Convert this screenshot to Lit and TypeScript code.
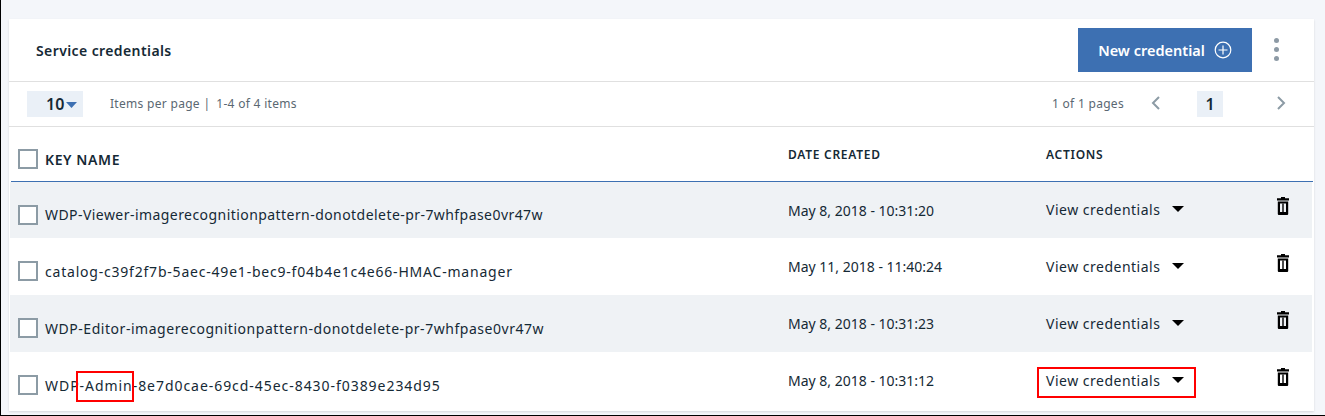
import { LitElement, html, css, svg } from "lit";
import { customElement } from "lit/decorators.js";

const rows = [
  { name: "WDP-Viewer-imagerecognitionpattern-donotdelete-pr-7whfpase0vr47w", date: "May 8, 2018 - 10:31:20", track: 0.44 },
  { name: "catalog-c39f2f7b-5aec-49e1-bec9-f04b4e1c4e66-HMAC-manager", date: "May 11, 2018 - 11:40:24", track: 0.79 },
  { name: "WDP-Editor-imagerecognitionpattern-donotdelete-pr-7whfpase0vr47w", date: "May 8, 2018 - 10:31:23", track: 0.535 },
  { name: "WDP-Admin-8e7d0cae-69cd-45ec-8430-f0389e234d95", date: "May 8, 2018 - 10:31:12", track: 0.95 },
];

const trash = svg`<svg class="trash" width="12" height="18" viewBox="0 0 12 18"><path fill="#000" fill-rule="evenodd" d="M4 0h4v1.2h4v2.3H0V1.2h4zM.8 4.500h10.400V17a1 1 0 0 1-1 1H1.800a1 1 0 0 1-1-1zM3 6.500v8.500h6V6.500z"/><path fill="#000" d="M5.300 6.500h1.400V15H5.300z"/></svg>`;

@customElement("app-root")
export class AppRoot extends LitElement {
  static styles = css`
    :host {
      display: block;
      box-sizing: border-box;
      width: 1325px;
      height: 416px;
      background: #f4f6fa;
      border-left: 1px solid #000;
      border-bottom: 1px solid #000;
      padding: 19px 11px 0 8px;
      font-family: "Noto Sans", sans-serif;
      color: #152935;
      overflow: hidden;
      position: relative;
    }
    .card {
      background: #fff;
      height: 392px;
      box-shadow: 0 1px 2px rgba(0, 0, 0, 0.12);
      display: flex;
      flex-direction: column;
    }
    .head {
      height: 62px;
      flex: none;
      display: flex;
      align-items: center;
      padding: 0 35px 0 27px;
      border-bottom: 1px solid #e0e0e0;
    }
    .title {
      font-size: 14px;
      font-weight: 600;
      letter-spacing: 0.4px;
      flex: 1;
    }
    .btn {
      width: 174px;
      height: 44px;
      background: #3d70b2;
      color: #fff;
      font-size: 14.5px;
      font-weight: 600;
      display: flex;
      align-items: center;
      justify-content: center;
      gap: 9px;
    }
    .more {
      display: flex;
      flex-direction: column;
      gap: 4px;
      margin: -2px 0 0 22px;
      width: 5px;
    }
    .more i {
      width: 5px;
      height: 5px;
      border-radius: 50%;
      background: #8d9aa5;
    }
    .bar {
      height: 44px;
      flex: none;
      display: flex;
      align-items: center;
      border-bottom: 1px solid #e0e0e0;
      padding-left: 18px;
      font-size: 12px;
      letter-spacing: 0.3px;
      color: #5a6872;
    }
    .size {
      box-sizing: border-box;
      width: 56px;
      height: 26px;
      padding-left: 19px;
      background: #eaf0f7;
      color: #152935;
      font-size: 16px;
      letter-spacing: 0;
      font-weight: 600;
      display: flex;
      align-items: center;
      gap: 2px;
      margin-right: 27px;
    }
    .size svg { margin-top: 1px; }
    .items { flex: 1; margin-top: -2px; }
    .sep { margin: 0 6px 0 0; }
    .pages { margin: -2px 27px 0 0; }
    .pg {
      width: 26px;
      height: 26px;
      background: #eaf0f7;
      color: #152935;
      font-size: 16px;
      font-weight: 600;
      letter-spacing: 0;
      display: flex;
      align-items: center;
      justify-content: center;
      margin: 0 53px 0 36px;
    }
    .nav { margin-top: -3px; }
    .nav.end { margin-right: 28px; }
    .row {
      display: grid;
      align-items: center;
      font-size: 14px;
    }
    .row.th {
      grid-template-columns: 777px 258px 1fr;
      height: 54px;
      flex: none;
      margin: 0 1px 0 2px;
      border-bottom: 1px solid #3d70b2;
      font-size: 12px;
      font-weight: 600;
      letter-spacing: 0.72px;
    }
    .row.td {
      grid-template-columns: 778px 258px 231px 1fr;
      height: 57px;
      flex: none;
      margin: 0 2px 0 1px;
    }
    .row.th + .row.td { height: 56px; }
    .row.odd { background: #eff2f5; }
    .namecell {
      display: flex;
      align-items: center;
      gap: 7px;
      padding: 9px 0 0 8px;
      white-space: nowrap;
    }
    .th .namecell {
      font-size: 14px;
      letter-spacing: 0.6px;
      padding: 10px 0 0 7px;
    }
    .box {
      box-sizing: border-box;
      width: 20px;
      height: 20px;
      border: 2px solid #8c9ba5;
      background: #fff;
      flex: none;
    }
    .date { white-space: nowrap; }
    .act {
      display: flex;
      align-items: center;
      gap: 12px;
      white-space: nowrap;
      letter-spacing: 0.5px;
      margin-top: -1px;
    }
    .act svg { margin-top: -1px; }
    .trash { display: block; margin-top: -8px; }
    .mark {
      position: absolute;
      box-sizing: border-box;
      border: 2px solid #f00;
    }
    .m1 { left: 75px; top: 371px; width: 58px; height: 31px; }
    .m2 { left: 1036px; top: 367px; width: 159px; height: 31px; }
  `;

  render() {
    return html`
      <div class="card">
        <div class="head">
          <div class="title">Service credentials</div>
          <div class="btn">New credential
            <svg width="18" height="18" viewBox="0 0 18 18" fill="none" stroke="#fff" stroke-width="1.2"><circle cx="9" cy="9" r="7.8"/><path d="M9 4.500v9M4.500 9h9"/></svg>
          </div>
          <div class="more"><i></i><i></i><i></i></div>
        </div>
        <div class="bar">
          <div class="size">10
            <svg width="11" height="6" viewBox="0 0 11 6"><path fill="#3d70b2" d="M0 0h11L5.500 6z"/></svg>
          </div>
          <div class="items">Items per page <span class="sep">|</span>1-4 of 4 items</div>
          <div class="pages">1 of 1 pages</div>
          <svg class="nav" width="10" height="14" viewBox="0 0 10 14" fill="none" stroke="#8c9ba5" stroke-width="2"><path d="M8 1L2 7l6 6"/></svg>
          <div class="pg">1</div>
          <svg class="nav end" width="10" height="14" viewBox="0 0 10 14" fill="none" stroke="#8c9ba5" stroke-width="2"><path d="M2 1l6 6-6 6"/></svg>
        </div>
        <div class="row th">
          <div class="namecell"><span class="box"></span>KEY NAME</div>
          <div>DATE CREATED</div>
          <div>ACTIONS</div>
        </div>
        ${rows.map(
          (r, i) => html`
            <div class="row td ${i % 2 === 0 ? "odd" : ""}">
              <div class="namecell" style="letter-spacing:${r.track}px"><span class="box"></span>${r.name}</div>
              <div class="date">${r.date}</div>
              <div class="act">View credentials
                <svg width="12" height="6" viewBox="0 0 12 6"><path fill="#000" d="M0 0h12L6 6z"/></svg>
              </div>
              <div>${trash}</div>
            </div>
          `
        )}
      </div>
      <div class="mark m1"></div>
      <div class="mark m2"></div>
    `;
  }
}
